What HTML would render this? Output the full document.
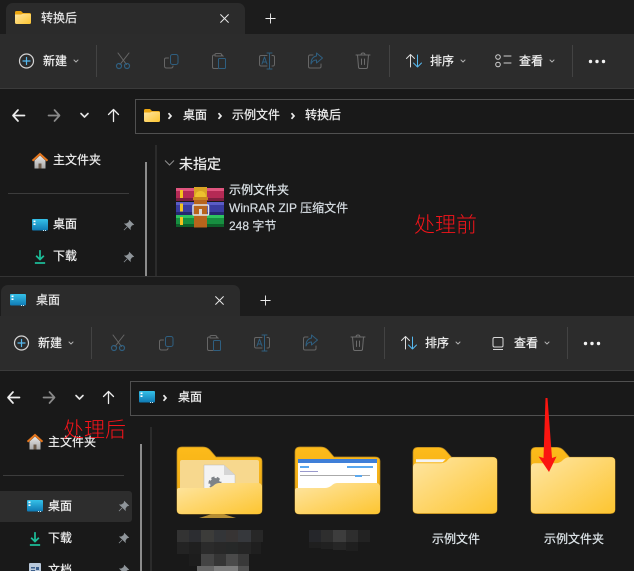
<!DOCTYPE html>
<html><head><meta charset="utf-8">
<style>
html,body{margin:0;padding:0;background:#191919;}
#p{position:relative;width:634px;height:571px;overflow:hidden;background:#191919;font-family:"Liberation Sans","Noto Sans CJK SC",sans-serif;color:#fff;font-size:12px;}
.a{position:absolute;}
.t{position:absolute;white-space:nowrap;line-height:16px;height:16px;-webkit-text-stroke:.2px currentColor;}
.n{-webkit-text-stroke:0;}
.w{position:absolute;left:0;width:634px;overflow:hidden;}
svg{position:absolute;overflow:visible;}
.i{fill:none;stroke-linecap:round;stroke-linejoin:round;}
</style></head><body>
<svg width="0" height="0" style="position:absolute">
<defs>
<linearGradient id="fg" x1="0" y1="0" x2="1" y2="1"><stop offset="0" stop-color="#fee6a4"/><stop offset="1" stop-color="#fdc530"/></linearGradient>
<linearGradient id="dk" x1="0" y1="0" x2="0" y2="1"><stop offset="0" stop-color="#35c1e8"/><stop offset="1" stop-color="#0f79b4"/></linearGradient>
<linearGradient id="hm" x1="0" y1="0" x2="0" y2="1"><stop offset="0" stop-color="#e8e8e8"/><stop offset="1" stop-color="#a8a8a8"/></linearGradient>
<symbol id="sf" viewBox="0 0 16 13" overflow="visible"><path d="M0 1.500Q0 0 1.500 0H6L8 2H14.500Q16 2 16 3.500V5H0Z" fill="#eba50f"/><path d="M0 3.500H6L8 2.800H14.500Q16 2.800 16 4.300V11.500Q16 13 14.500 13H1.500Q0 13 0 11.500Z" fill="url(#fg)"/></symbol>
<symbol id="sd" viewBox="0 0 16 12" overflow="visible"><rect width="16" height="11.500" rx="1" fill="url(#dk)"/><rect x="1.500" y="1.500" width="2" height="1.600" fill="#fff"/><rect x="1.500" y="4.400" width="2" height="1.600" fill="#fff"/><rect x="11" y="11" width="1" height="1" fill="#cfe9f5"/><rect x="13" y="11" width="1" height="1" fill="#cfe9f5"/></symbol>
<symbol id="sh" viewBox="0 0 16 16" overflow="visible"><path d="M2.500 7.500L8 2.500L13.500 7.500V15.500H2.500Z" fill="url(#hm)"/><rect x="6.500" y="10.500" width="3" height="5" fill="#6b5a4a"/><path d="M0.500 7.800L8 1L15.500 7.800" fill="none" stroke="#e5761c" stroke-width="2"/></symbol>
<symbol id="spin" viewBox="0 0 12 12" overflow="visible"><path d="M7 0.500L11.500 5L9.500 5.600L7.800 8.200L8 10L2 4.200L3.800 4.200L6.400 2.500ZM4.400 7.600L1 11" fill="#8f959a" stroke="#8f959a" stroke-width=".8"/></symbol>
<symbol id="sdl" viewBox="0 0 14 16" overflow="visible"><path d="M7 0V10.500M2.500 6.500L7 11L11.500 6.500" fill="none" stroke="#1cbf9a" stroke-width="2"/><path d="M1 15H13" stroke="#1cbf9a" stroke-width="2"/></symbol>
<symbol id="chrome" viewBox="0 0 600 90" overflow="visible">
<circle cx="26.500" cy="61" r="7" class="i" stroke="#d4d4d4" stroke-width="1.200"/>
<path d="M26.500 57.500V64.500M23 61H30" class="i" stroke="#56b9ef" stroke-width="1.200"/>
<path d="M74 60L76 62L78 60" class="i" stroke="#b0b0b0"/>
<path d="M96.500 45V77M389.500 45V77M572.500 45V77" stroke="#434343"/>
<path d="M118 53L126.500 64.500M129 53L120 64.500" class="i" stroke="#666"/>
<circle cx="119" cy="66" r="2.500" class="i" stroke="#2f5f80" stroke-width="1.200"/><circle cx="127" cy="66" r="2.500" class="i" stroke="#2f5f80" stroke-width="1.200"/>
<path d="M168.500 58H166Q164.500 58 164.500 59.500V66Q164.500 68 166.500 68H171Q173 68 173 66" class="i" stroke="#666"/>
<rect x="170.500" y="54.500" width="7.500" height="10" rx="2" class="i" stroke="#2f5f80"/>
<path d="M214.500 55H214Q212.500 55 212.500 56.500V67Q212.500 68.500 214 68.500H218M223 56.500Q223 55 221.500 55M215 56V54.500Q215 53.500 216.500 53.500H220Q221.500 53.500 221.500 54.500V56Z" class="i" stroke="#666"/>
<rect x="218.500" y="58.500" width="7" height="10" rx="1" class="i" stroke="#2f5f80"/>
<path d="M267 55.500H261Q259.500 55.500 259.500 57V64Q259.500 66 261 66H267M272 55.500H273Q274.500 55.500 274.500 57V64Q274.500 66 273 66H272" class="i" stroke="#666"/>
<path d="M269.500 53V69M267 53H272M267 69H272" class="i" stroke="#2f5f80"/>
<path d="M262 64L264.500 57L267 64M263 62H266" class="i" stroke="#2f5f80"/>
<path d="M313 55H310Q308.500 55 308.500 57V66.500Q308.500 68 310 68H319.500Q321 68 321 66.500V64" class="i" stroke="#666"/>
<path d="M316.500 53L322.500 58L316.500 63V60Q312.500 60 311 64Q311 57 316.500 56Z" class="i" stroke="#2f5f80"/>
<path d="M356 55H370M361 55Q361 53 363 53Q365 53 365 55M357.500 55L358.500 67Q358.500 68.500 360 68.500H366Q367.500 68.500 367.500 67L368.500 55M361.500 59V64.500M364.500 59V64.500" class="i" stroke="#6d6d6d"/>
<path d="M410.500 67V54.500M406.500 58.500L410.500 54.500L414.500 58.500" class="i" stroke="#dcdcdc"/>
<path d="M417.500 55V67M413.500 63L417.500 67L421.500 63" class="i" stroke="#56b9ef"/>
<path d="M461 60L463 62L465 60" class="i" stroke="#b0b0b0"/>
<path d="M550 60L552 62L554 60" class="i" stroke="#b0b0b0"/>
<g fill="#f2f2f2"><circle cx="590.500" cy="61.500" r="1.700"/><circle cx="597" cy="61.500" r="1.700"/><circle cx="603.500" cy="61.500" r="1.700"/></g>
<path d="M13.500 115.500H24.500M18 110L13 115.500L18 121" class="i" stroke="#ededed" stroke-width="1.700"/>
<path d="M48.500 115.500H59.500M54.500 110L59.500 115.500L54.500 121" class="i" stroke="#8a8a8a" stroke-width="1.700"/>
<path d="M81 113.500L84.500 117L88 113.500" class="i" stroke="#e5e5e5" stroke-width="1.600"/>
<path d="M113.500 121.500V110M108.500 114.500L113.500 109.500L118.500 114.500" class="i" stroke="#ededed" stroke-width="1.300"/>
</symbol>
<symbol id="tabclose" viewBox="0 0 12 12" overflow="visible"><path d="M1.500 1.500L10.500 10.500M10.500 1.500L1.500 10.500" stroke="#e8e8e8" stroke-width="1.100" fill="none"/></symbol>
<symbol id="tabplus" viewBox="0 0 12 12" overflow="visible"><path d="M6 0.500V11.500M0.500 6H11.500" stroke="#eeeeee" stroke-width="1" fill="none"/></symbol>
<symbol id="sep" viewBox="0 0 6 8" overflow="visible"><path d="M1.500 1.200L4 4L1.500 6.800" fill="none" stroke="#ececec" stroke-width="1.700"/></symbol>
<linearGradient id="bk" x1="0" y1="0" x2="0" y2="1"><stop offset="0" stop-color="#fdbb1a"/><stop offset="1" stop-color="#e9a514"/></linearGradient>
<symbol id="bigback" viewBox="0 0 85 67" overflow="visible"><path d="M0 5Q0 0 5 0H26Q30 0 33 3L39 10H80Q85 10 85 14V63Q85 67 80 67H5Q0 67 0 63Z" fill="url(#bk)" stroke="#b88820" stroke-width=".7"/></symbol>
</defs>
</svg>

<div id="p">
<!-- WINDOW 1 -->
<div class="w" style="top:0;height:277px;background:#191919;">
<div class="a" style="left:0;top:0;width:634px;height:34px;background:#1c1c1c;"></div>
<div class="a" style="left:6px;top:3px;width:239px;height:31px;background:#2b2b2b;border-radius:7px 7px 0 0;"></div>
<div class="a" style="left:0;top:34px;width:634px;height:54px;background:#2c2c2c;border-bottom:1px solid #3b3b3b;"></div>
<svg style="left:15px;top:11px" width="16" height="13"><use href="#sf"/></svg>
<span class="t" style="left:41px;top:10px;color:#e6e6e6;">转换后</span>
<svg style="left:219px;top:13px" width="11" height="11"><use href="#tabclose"/></svg>
<svg style="left:265px;top:13px" width="11" height="11"><use href="#tabplus"/></svg>
<svg style="left:0;top:0" width="634" height="140" viewBox="0 0 634 140"><use href="#chrome" width="600" height="90"/>
<circle cx="498" cy="57" r="2.300" class="i" stroke="#d0d0d0"/><circle cx="498" cy="64.500" r="2.300" class="i" stroke="#d0d0d0"/><path d="M504 56H511M504 63H511" class="i" stroke="#d0d0d0"/></svg>
<span class="t" style="left:43px;top:53px;color:#f2f2f2;">新建</span>
<span class="t" style="left:430px;top:53px;color:#f2f2f2;">排序</span>
<span class="t" style="left:519px;top:53px;color:#f2f2f2;">查看</span>
<div class="a" style="left:135px;top:99px;width:520px;height:33px;border:1px solid #505050;"></div>
<svg style="left:144px;top:109px" width="16" height="13"><use href="#sf"/></svg>
<svg style="left:167px;top:112px" width="6" height="8"><use href="#sep"/></svg>
<span class="t" style="left:183px;top:107px;color:#f0f0f0;">桌面</span>
<svg style="left:217px;top:112px" width="6" height="8"><use href="#sep"/></svg>
<span class="t" style="left:232px;top:107px;color:#f0f0f0;">示例文件</span>
<svg style="left:290px;top:112px" width="6" height="8"><use href="#sep"/></svg>
<span class="t" style="left:305px;top:107px;color:#f0f0f0;">转换后</span>
<svg style="left:32px;top:153px" width="16" height="16"><use href="#sh"/></svg>
<span class="t" style="left:53px;top:152px;color:#eee;">主文件夹</span>
<div class="a" style="left:8px;top:193px;width:121px;height:1px;background:#3c3c3c;"></div>
<svg style="left:32px;top:219px" width="16" height="12"><use href="#sd"/></svg>
<span class="t" style="left:53px;top:216px;color:#f2f2f2;">桌面</span>
<svg style="left:123px;top:220px" width="11" height="11"><use href="#spin"/></svg>
<svg style="left:34px;top:249px" width="12" height="16"><use href="#sdl"/></svg>
<span class="t" style="left:53px;top:248px;color:#f2f2f2;">下载</span>
<svg style="left:123px;top:252px" width="11" height="11"><use href="#spin"/></svg>
<div class="a" style="left:145px;top:162px;width:2px;height:114px;background:#8c8c8c;"></div>
<div class="a" style="left:155px;top:145px;width:2px;height:132px;background:#2b2b2b;"></div>
<svg style="left:164px;top:160px" width="11" height="6"><path d="M1 .5L5.500 5L10 .5" fill="none" stroke="#8f8f8f" stroke-width="1"/></svg>
<span class="t" style="left:179px;top:155px;font-size:14px;line-height:18px;height:18px;color:#f0f0f0;">未指定</span>
<svg style="left:176px;top:187px" width="48" height="41" viewBox="0 0 48 41">
<rect x="0" y="1" width="48" height="13" fill="#b52a55"/><rect x="0" y="1" width="48" height="3" fill="#e0557f"/><rect y="11" width="48" height="3" fill="#7c1e3f"/>
<rect x="0" y="15" width="48" height="13" fill="#3a3ca0"/><rect x="0" y="15" width="48" height="3" fill="#5a5cc6"/><rect y="25" width="48" height="3" fill="#25276f"/>
<rect x="0" y="28" width="48" height="12" fill="#178f40"/><rect x="0" y="28" width="48" height="3" fill="#2ec35f"/><rect y="37" width="48" height="3" fill="#0e5f2a"/>
<rect x="4" y="3" width="3" height="8" fill="#f3c21f"/><rect x="4" y="16.500" width="3" height="8" fill="#f3c21f"/><rect x="4" y="30" width="3" height="8" fill="#f3c21f"/>
<rect x="18" y="0" width="13" height="40.500" fill="#b8641c"/>
<path d="M18 12V0H31V12Z" fill="#d9a424"/><path d="M19 11Q19 4 24.500 4Q30 4 30 11Z" fill="#edc02e"/><rect x="17" y="10" width="15" height="3" fill="#c9851d"/>
<rect x="17" y="18" width="15.500" height="10" rx="1" fill="none" stroke="#dfe3e6" stroke-width="1.500"/><rect x="23" y="22" width="3" height="6" fill="#d8d8d8"/>
</svg>
<span class="t" style="left:229px;top:182px;color:#dfe6ea;">示例文件夹</span>
<span class="t" style="left:229px;top:200px;color:#d6dde2;">WinRAR ZIP 压缩文件</span>
<span class="t" style="left:229px;top:218px;color:#d6dde2;">248 字节</span>
<div class="a" style="left:0;top:276px;width:634px;height:1px;background:#333;"></div>
</div>

<!-- WINDOW 2 -->
<div class="w" style="top:277px;height:294px;background:#191919;">
<div class="a" style="left:0;top:0;width:634px;height:39px;background:#1c1c1c;"></div>
<div class="a" style="left:1px;top:8px;width:239px;height:31px;background:#2b2b2b;border-radius:7px 7px 0 0;"></div>
<div class="a" style="left:0;top:39px;width:634px;height:54px;background:#2c2c2c;border-bottom:1px solid #3b3b3b;"></div>
<svg style="left:10px;top:17px" width="16" height="12"><use href="#sd"/></svg>
<span class="t" style="left:36px;top:15px;color:#e6e6e6;">桌面</span>
<svg style="left:214px;top:18px" width="11" height="11"><use href="#tabclose"/></svg>
<svg style="left:260px;top:18px" width="11" height="11"><use href="#tabplus"/></svg>
<svg style="left:-5px;top:5px" width="639" height="140" viewBox="0 0 639 140"><use href="#chrome" width="600" height="90"/>
<rect x="498" y="55.500" width="10" height="9.500" rx="1.500" class="i" stroke="#d8d8d8"/><path d="M498 67.500H508" stroke="#d8d8d8"/></svg>
<span class="t" style="left:38px;top:58px;color:#f2f2f2;">新建</span>
<span class="t" style="left:425px;top:58px;color:#f2f2f2;">排序</span>
<span class="t" style="left:514px;top:58px;color:#f2f2f2;">查看</span>
<div class="a" style="left:130px;top:104px;width:520px;height:33px;border:1px solid #505050;"></div>
<svg style="left:139px;top:114px" width="16" height="12"><use href="#sd"/></svg>
<svg style="left:162px;top:117px" width="6" height="8"><use href="#sep"/></svg>
<span class="t" style="left:178px;top:112px;color:#f0f0f0;">桌面</span>
<svg style="left:27px;top:157px" width="16" height="16"><use href="#sh"/></svg>
<span class="t" style="left:48px;top:157px;color:#eee;">主文件夹</span>
<div class="a" style="left:3px;top:198px;width:121px;height:1px;background:#3c3c3c;"></div>
<div class="a" style="left:-4px;top:214px;width:136px;height:31px;background:#2d2d2d;border-radius:3px;"></div>
<svg style="left:27px;top:223px" width="16" height="12"><use href="#sd"/></svg>
<span class="t" style="left:48px;top:221px;color:#f2f2f2;">桌面</span>
<svg style="left:118px;top:224px" width="11" height="11"><use href="#spin"/></svg>
<svg style="left:29px;top:254px" width="12" height="16"><use href="#sdl"/></svg>
<span class="t" style="left:48px;top:253px;color:#f2f2f2;">下载</span>
<svg style="left:118px;top:256px" width="11" height="11"><use href="#spin"/></svg>
<svg style="left:29px;top:286px" width="12" height="10"><rect width="12" height="15" rx="1" fill="#b9c8da"/><rect x="2" y="4" width="4" height="1.500" fill="#3d5f8c"/><rect x="7" y="4" width="3" height="3" fill="#3d5f8c"/><rect x="2" y="7" width="4" height="1.500" fill="#3d5f8c"/></svg>
<span class="t" style="left:48px;top:285px;color:#f2f2f2;">文档</span>
<svg style="left:118px;top:288px" width="11" height="11"><use href="#spin"/></svg>
<div class="a" style="left:140px;top:167px;width:2px;height:127px;background:#8c8c8c;"></div>
<div class="a" style="left:150px;top:150px;width:2px;height:144px;background:#2b2b2b;"></div>

<!-- folder 1 -->
<svg style="left:177px;top:170px" width="85" height="75" viewBox="0 0 85 75">
<path d="M35 67H46L59 71H22Z" fill="#b58e35"/>
<use href="#bigback" width="85" height="67"/>
<rect x="3" y="13" width="79" height="34" rx="2" fill="#f7d88e"/>
<path d="M27 18H47L58 28V44H27Z" fill="#f3f3f3" stroke="#bbb" stroke-width=".5"/><path d="M47 18L47 28H58Z" fill="#d5d5d5"/>
<circle cx="38" cy="36" r="5" fill="#7e8388" stroke="#7e8388" stroke-width="3" stroke-dasharray="3 2"/>
<path d="M0 43Q0 41 2 41H30Q33 41 36 39Q39 36 42 36H81Q85 36 85 40V63Q85 67 81 67H4Q0 67 0 63Z" fill="url(#fg)"/>
</svg>
<!-- folder 2 -->
<svg style="left:295px;top:170px" width="85" height="67" viewBox="0 0 85 67">
<use href="#bigback" width="85" height="67"/>
<rect x="3" y="12" width="79" height="36" fill="#fff"/>
<rect x="3" y="12" width="79" height="4" fill="#3f7fd8"/>
<rect x="5" y="19" width="9" height="2" fill="#5aa8ef"/><rect x="52" y="19" width="26" height="2" fill="#5aa8ef"/><rect x="5" y="24" width="18" height="1" fill="#99c"/>
<rect x="5" y="28" width="70" height="1" fill="#aaa"/><rect x="60" y="28" width="7" height="2" fill="#5aa8ef"/>
<path d="M0 43Q0 41 2 41H30Q33 41 36 39Q39 36 42 36H81Q85 36 85 40V63Q85 67 81 67H4Q0 67 0 63Z" fill="url(#fg)"/>
</svg>
<!-- folder 3 -->
<svg style="left:413px;top:170px" width="84" height="67" viewBox="0 0 85 67">
<use href="#bigback" width="85" height="67"/>
<path d="M3 12H33L30 15H3Z" fill="#f4f4f4"/>
<path d="M0 20Q0 16 4 16H28Q31 16 34 14Q37 10 40 10H81Q85 10 85 14V63Q85 66.500 81 66.500H4Q0 66.500 0 63Z" fill="url(#fg)"/>
</svg>
<!-- folder 4 -->
<svg style="left:531px;top:170px" width="84" height="67" viewBox="0 0 85 67">
<use href="#bigback" width="85" height="67"/>
<path d="M0 20Q0 16 4 16H25Q28 16 31 14Q35 10 38 10H81Q85 10 85 14V63Q85 66.500 81 66.500H4Q0 66.500 0 63Z" fill="url(#fg)"/>
</svg>

<span class="t" style="left:432px;top:254px;color:#dfe6ea;">示例文件</span>
<span class="t" style="left:544px;top:254px;color:#dfe6ea;">示例文件夹</span>

<!-- mosaic -->
<svg style="left:0;top:0" width="634" height="294" viewBox="0 277 634 294">
<g shape-rendering="crispEdges">
<rect x="177" y="530" width="12" height="12" fill="#333"/><rect x="189" y="530" width="12" height="12" fill="#2c2d31"/><rect x="201" y="530" width="13" height="12" fill="#3c3c3a"/><rect x="214" y="530" width="12" height="12" fill="#333538"/><rect x="226" y="530" width="12" height="12" fill="#373434"/><rect x="238" y="530" width="13" height="12" fill="#36383c"/><rect x="251" y="530" width="12" height="12" fill="#272727"/>
<rect x="177" y="542" width="12" height="12" fill="#232323"/><rect x="189" y="542" width="12" height="12" fill="#1f1f1f"/><rect x="201" y="542" width="13" height="12" fill="#2b2b2b"/><rect x="214" y="542" width="12" height="12" fill="#282828"/><rect x="226" y="542" width="12" height="12" fill="#262828"/><rect x="238" y="542" width="13" height="12" fill="#252525"/><rect x="251" y="542" width="10" height="12" fill="#1f1f1f"/>
<rect x="189" y="554" width="12" height="12" fill="#1d1d1d"/><rect x="201" y="554" width="13" height="12" fill="#444"/><rect x="214" y="554" width="12" height="12" fill="#353535"/><rect x="226" y="554" width="12" height="12" fill="#4a4a4a"/><rect x="238" y="554" width="11" height="12" fill="#393939"/>
<rect x="197" y="566" width="17" height="5" fill="#666"/><rect x="214" y="566" width="24" height="5" fill="#7c7c7c"/><rect x="238" y="566" width="11" height="5" fill="#505050"/>
<rect x="309" y="530" width="12" height="12" fill="#25262a"/><rect x="321" y="530" width="12" height="12" fill="#2e2e2e"/><rect x="333" y="530" width="13" height="12" fill="#3d3d3d"/><rect x="346" y="530" width="12" height="12" fill="#2e2e2e"/><rect x="358" y="530" width="12" height="12" fill="#222"/>
<rect x="309" y="542" width="12" height="6" fill="#1f1f1f"/><rect x="321" y="542" width="12" height="7" fill="#212121"/><rect x="333" y="542" width="13" height="8" fill="#262626"/><rect x="346" y="542" width="12" height="9" fill="#1f1f1f"/>
</g>
<path d="M545.500 398H547.500L552 458L556.500 456.500L549 472L538.500 456.500L543.500 458Z" fill="#fb1510"/>
</svg>
</div>

<span class="t n" style="left:414px;top:214px;font-size:21px;line-height:24px;height:24px;color:#f3141a;font-weight:300;">处理前</span>
<span class="t n" style="left:63px;top:419px;font-size:21px;line-height:24px;height:24px;color:#f3141a;font-weight:300;">处理后</span>
</div>
</body></html>
